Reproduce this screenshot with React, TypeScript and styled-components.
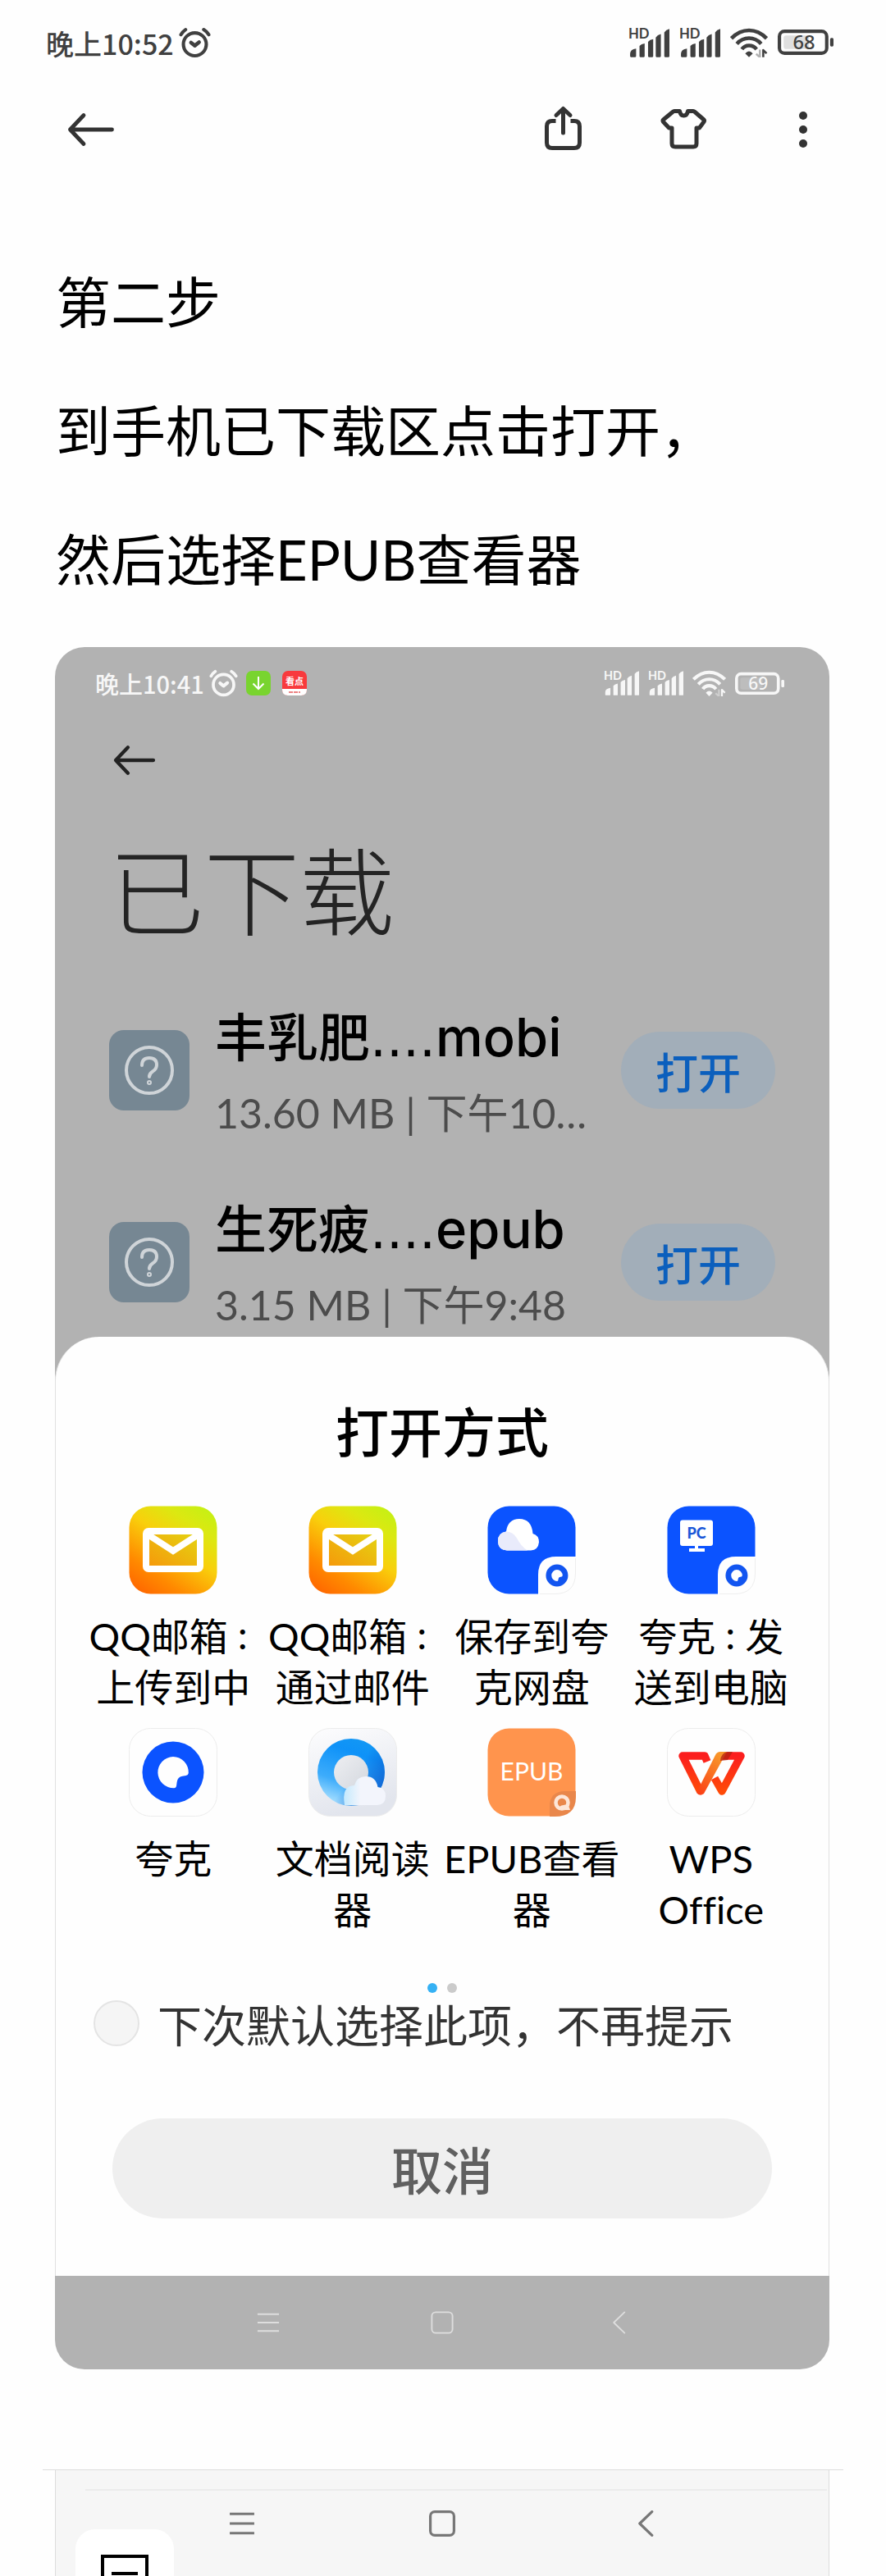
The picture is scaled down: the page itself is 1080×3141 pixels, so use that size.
import React from "react";
import styled, { createGlobalStyle } from "styled-components";

const Global = createGlobalStyle`
  *, *::before, *::after { box-sizing: border-box; }
  body {
    margin: 0;
    background: #fefefe;
    color: #000;
    font-family: Lato, "Noto Sans CJK SC", sans-serif;
    font-variant-ligatures: none;
  }
  h1, h2, p { margin: 0; font-weight: inherit; }
  button {
    font: inherit;
    color: inherit;
    border: 0;
    padding: 0;
    background: none;
    cursor: pointer;
  }
  svg { display: block; flex: none; }
`;

/* ---------- page ---------- */

const Page = styled.div`
  display: flex;
  flex-direction: column;
`;

const StatusBar = styled.div<{ $small?: boolean }>`
  display: flex;
  align-items: center;
  justify-content: space-between;
  height: ${(p) => (p.$small ? 88 : 104)}px;
  padding: ${(p) => (p.$small ? "0 55px 0 49px" : "0 64px 0 56px")};
  color: ${(p) => (p.$small ? "#f7f7f7" : "#404040")};
  font-family: "Noto Sans CJK SC", sans-serif;
  font-size: ${(p) => (p.$small ? 29 : 34)}px;
  font-weight: 500;
`;

const StatusGroup = styled.div<{ $gap: number }>`
  display: flex;
  align-items: center;
  gap: ${(p) => p.$gap}px;
`;

const AppBadges = styled.div`
  display: flex;
  gap: 14px;
  margin-left: 4px;
`;

const Toolbar = styled.header`
  display: flex;
  align-items: center;
  justify-content: space-between;
  height: 108px;
  padding: 0 70px 0 81px;
  color: #333;
`;

const ToolbarActions = styled.div`
  display: flex;
  gap: 87px;
`;

const Article = styled.main`
  padding: 78px 69px 122px 67px;
`;

const Paragraph = styled.p`
  padding-left: 1px;
  font-size: 67px;
  line-height: 157px;
`;

/* ---------- embedded phone card ---------- */

const Phone = styled.section`
  margin-top: 28px;
  border-radius: 36px;
  overflow: hidden;
  background: #b2b2b2;
`;

const PhoneToolbar = styled.div`
  display: flex;
  align-items: center;
  height: 100px;
  padding: 0 70px;
  color: #222;
`;

const PhoneTitle = styled.h1`
  padding: 37px 66px 61px;
  font-size: 116px;
  font-weight: 300;
  line-height: 148px;
  color: #242424;
`;

const FileList = styled.ul`
  display: flex;
  flex-direction: column;
  gap: 70px;
  margin: 0;
  padding: 0 66px 9px;
  list-style: none;
`;

const FileRow = styled.li`
  display: flex;
  align-items: center;
  min-height: 164px;
`;

const FileIcon = styled.div`
  display: flex;
  align-items: center;
  justify-content: center;
  width: 98px;
  height: 98px;
  border-radius: 18px;
  background: #768793;
`;

const FileText = styled.div`
  flex: 1;
  min-width: 0;
  margin: 0 31px;
`;

const FileName = styled.div`
  height: 82px;
  font-size: 63px;
  font-weight: 500;
  line-height: 80px;
  white-space: nowrap;
`;

const Dots = styled.span`
  font-family: "DejaVu Sans", sans-serif;
  line-height: 1;
`;

const Extension = styled.span`
  font-family: Inter, sans-serif;
  font-size: 65px;
  line-height: 1;
`;

const FileMeta = styled.div`
  margin-top: 22px;
  font-size: 50px;
  line-height: 58px;
  color: #4c4c4c;
  white-space: nowrap;
`;

const OpenButton = styled.button`
  width: 188px;
  height: 94px;
  border-radius: 47px;
  background: #a2aeb9;
  color: #0b5fbd;
  font-size: 52px;
  font-weight: 500;
`;

/* ---------- bottom sheet ---------- */

const Sheet = styled.div`
  display: flex;
  flex-direction: column;
  padding: 76px 0 70px;
  border: solid #e0e0e0;
  border-width: 0 1px;
  border-radius: 54px 54px 0 0;
  background: #fefefe;
`;

const SheetTitle = styled.h2`
  font-size: 65px;
  font-weight: 500;
  line-height: 80px;
  text-align: center;
`;

const AppGrid = styled.div`
  display: grid;
  grid-template-columns: repeat(4, 1fr);
  row-gap: 18px;
  margin: 50px 34px 0;
`;

const AppItem = styled.button`
  display: flex;
  flex-direction: column;
  align-items: center;
  gap: 20px;
  color: #000;
`;

const AppLabel = styled.span`
  height: 125px;
  font-size: 47px;
  line-height: 62px;
  text-align: center;
  white-space: pre;
`;

const Colon = styled.span`
  font-family: "Noto Sans CJK TC", sans-serif;
  font-size: 36px;
  font-weight: 500;
  line-height: 1;
`;

const Pager = styled.div`
  display: flex;
  justify-content: center;
  gap: 12px;
  margin-top: 58px;
`;

const PageDot = styled.span<{ $active?: boolean }>`
  width: 12px;
  height: 12px;
  border-radius: 50%;
  background: ${(p) => (p.$active ? "#35b1f4" : "#cbcbcb")};
`;

const Remember = styled.label`
  display: flex;
  align-items: center;
  gap: 22px;
  height: 64px;
  margin-top: 5px;
  padding: 0 46px;
  font-size: 54px;
  color: #333;
`;

const Check = styled.input`
  appearance: none;
  width: 56px;
  height: 56px;
  margin: 0;
  border: 2px solid #e4e4e4;
  border-radius: 50%;
  background: #f5f5f5;
`;

const CancelButton = styled.button`
  height: 122px;
  margin: 84px 69px 0;
  border-radius: 61px;
  background: #efefef;
  color: #606060;
  font-size: 62px;
  font-weight: 500;
`;

/* ---------- navigation ---------- */

const NavBar = styled.nav<{ $dark?: boolean }>`
  display: flex;
  justify-content: center;
  align-items: center;
  gap: ${(p) => (p.$dark ? 212 : 184)}px;
  height: ${(p) => (p.$dark ? 80 : 114)}px;
  color: ${(p) => (p.$dark ? "#777" : "#dedede")};
`;

const Footer = styled.footer`
  padding: 0 52px;
`;

const FooterPanel = styled.div`
  position: relative;
  height: 129px;
  margin: 0 17px 0 15px;
  padding-top: 23px;
  overflow: hidden;
  border: solid #dcdcdc;
  border-width: 0 1px;
  background: #f6f6f6;
`;

const FooterRule = styled.hr<{ $inset?: boolean }>`
  height: ${(p) => (p.$inset ? 2 : 1)}px;
  margin: ${(p) => (p.$inset ? "0 2px 0 36px" : "0")};
  border: 0;
  background: ${(p) => (p.$inset ? "#ececec" : "#dcdcdc")};
`;

const FloatingNote = styled.button`
  position: absolute;
  left: 24px;
  top: 72px;
  display: flex;
  justify-content: center;
  width: 120px;
  height: 120px;
  padding-top: 31px;
  border-radius: 24px;
  background: #fff;
`;

/* ---------- icons ---------- */

const stroke = {
  fill: "none",
  stroke: "currentColor",
  strokeLinecap: "round" as const,
  strokeLinejoin: "round" as const,
};

const AlarmIcon = ({ w }: { w: number }) => (
  <svg width={w} height={w} viewBox="0 0 38 38" {...stroke} strokeWidth="4">
    <circle cx="19" cy="20.500" r="13.600" />
    <path d="M2.500 9q2-3.500 5.500-6M35.500 9q-2-3.500-6-6" />
    <path d="M14.500 18.500l4.500 3.500 5-4" strokeWidth="4.500" />
  </svg>
);

const SignalIcon = ({ w }: { w: number }) => (
  <svg width={w} height={(w * 46) / 48} viewBox="0 -6 48 46" fill="currentColor">
    <text x="0" y="12.500" fontSize="16" fontWeight="700" fontFamily="Lato, sans-serif">HD</text>
    <path d="M2 33v-3q0-5 7-6v9q0 1-1 1H3q-1 0-1-1zM13 33V21q2-2.500 6-3v15q0 1-1 1h-4q-1 0-1-1zM23 33V16q2-2.500 6-3v20q0 1-1 1h-4q-1 0-1-1zM32 33V11q2-3 6-4v26q0 1-1 1h-4q-1 0-1-1zM42 33V5q2-3 6-4v32q0 1-1 1h-4q-1 0-1-1z" />
  </svg>
);

const WifiIcon = ({ w }: { w: number }) => (
  <svg width={w} height={(w * 36) / 45} viewBox="0 0 45 36" {...stroke} strokeLinecap="butt" strokeWidth="4.500">
    <path d="M1.500 12.500Q11 3 22.500 3T43.500 12.500M8 19Q14 12.300 22.500 12.300T37 19M14 25.500Q17 21 22.500 21T31.500 25.500" />
    <path d="M18 30.500q4.500-5 9 0l-4.500 4.500z" fill="currentColor" stroke="none" />
    <path d="M35.500 26v9l-4.500-4" strokeWidth="2.500" strokeOpacity=".4" />
    <path d="M39.500 35v-8.500l4 4" strokeWidth="2.500" />
  </svg>
);

const BatteryIcon = ({ w, level }: { w: number; level: number }) => (
  <svg width={w} height={(w * 34) / 66} viewBox="0 -2 66 34" fill="currentColor">
    <rect x="2" y="2" width="56" height="26" rx="6" fill="none" stroke="currentColor" strokeWidth="4" />
    <rect x="7" y="7" width="30" height="16" rx="3" opacity=".16" />
    <rect x="62" y="10" width="4" height="10" rx="1.500" />
    <text x="31" y="23.500" fontSize="23" fontWeight="500" textAnchor="middle" fontFamily="Noto Sans, sans-serif">{level}</text>
  </svg>
);

const StatusIcons = ({ small, level }: { small?: boolean; level: number }) => (
  <StatusGroup $gap={small ? 11 : 12}>
    <SignalIcon w={small ? 43 : 50} />
    <SignalIcon w={small ? 43 : 50} />
    <WifiIcon w={small ? 41 : 46} />
    <BatteryIcon w={small ? 60 : 68} level={level} />
  </StatusGroup>
);

const BackIcon = ({ w }: { w: number }) => (
  <svg width={w} height={w} viewBox="0 0 60 60" {...stroke} strokeWidth="4.800">
    <path d="M4.500 30H55.500M21 12.500L4.500 30 21 47.500" />
  </svg>
);

const ShareIcon = () => (
  <svg width="60" height="60" viewBox="0 0 60 60" {...stroke} strokeWidth="5">
    <path d="M21.500 19.500H17q-6.500 0-6.500 6.500v20q0 6.500 6.500 6.500H44q6.500 0 6.500-6.500V26q0-6.500-6.500-6.500h-4.500" strokeLinecap="butt" />
    <path d="M30.500 34V5M22 12.500L30.500 4.500 39 12.500" />
  </svg>
);

const ShirtIcon = () => (
  <svg width="60" height="60" viewBox="0 0 60 60" {...stroke} strokeWidth="5">
    <path d="M19 7.500h6.500q1 5.500 5 5.500t5-5.500H42q1 0 2 1L55 18q1 1 0 2.500l-5.500 7.500H46v19q0 4-4 4H20q-4 0-4-4V28h-3.500L5.500 20.500Q4.500 19 5.500 18L17 8.500q1-1 2-1z" />
  </svg>
);

const MoreIcon = () => (
  <svg width="60" height="60" viewBox="0 0 60 60" fill="currentColor">
    <circle cx="29" cy="13" r="5" />
    <circle cx="29" cy="30" r="5" />
    <circle cx="29" cy="47" r="5" />
  </svg>
);

const DownloadBadge = () => (
  <svg width="30" height="30" viewBox="0 0 30 30">
    <rect width="30" height="30" rx="7" fill="#79d42f" />
    <path d="M15 7v15M8.500 15.500L15 22l6.500-6.500" fill="none" stroke="#fff" strokeWidth="2" />
  </svg>
);

const KandianBadge = () => (
  <svg width="30" height="30" viewBox="0 0 30 30">
    <rect width="30" height="30" rx="7" fill="#f83a3d" />
    <path d="M0 22h30v1q0 7-7 7H7q-7 0-7-7z" fill="#fff" />
    <text x="15" y="17" fontSize="11" fontWeight="700" fill="#fff" textAnchor="middle">看点</text>
    <path d="M8 26h3m1-1v2m2-1h3m1-1v2m2-1h2" stroke="#e8595b" strokeWidth="1.500" />
  </svg>
);

const QuestionIcon = () => (
  <svg width="62" height="62" viewBox="0 0 62 62" {...stroke} stroke="#cfd4d8" strokeWidth="4">
    <circle cx="31" cy="31" r="28" />
    <path d="M22 25q0-9 9-9t9 8.500q0 5-5 8-4 2.500-4 6.500" />
    <circle cx="31" cy="46" r="1" />
  </svg>
);

const MenuNav = ({ w, s }: { w: number; s: number }) => (
  <svg width={w} height={w} viewBox="0 0 30 30" fill="none" stroke="currentColor" strokeWidth={s}>
    <path d="M1 4h28M1 15h28M1 26h28" />
  </svg>
);

const HomeNav = ({ w, s }: { w: number; s: number }) => (
  <svg width={w} height={w} viewBox="0 0 30 30" fill="none" stroke="currentColor" strokeWidth={s}>
    <rect x="1.500" y="1.500" width="27" height="27" rx="5" />
  </svg>
);

const BackNav = ({ w, s }: { w: number; s: number }) => (
  <svg width={w} height={w} viewBox="0 0 30 30" {...stroke} strokeWidth={s}>
    <path d="M26 1.500L12 15 26 28.500" />
  </svg>
);

const NoteIcon = () => (
  <svg width="58" height="60" viewBox="0 0 58 60" fill="none" stroke="#000" strokeWidth="4">
    <path d="M2 2h54v56H2zM13 23h32" />
  </svg>
);

const Tile = ({ children, fill, border }: { children?: React.ReactNode; fill: string; border?: boolean }) => (
  <svg width="108" height="108" viewBox="0 0 108 108">
    <rect x=".5" y=".5" width="107" height="107" rx="26" fill={fill} stroke={border ? "#ececec" : "none"} />
    {children}
  </svg>
);

const MailTile = ({ id }: { id: string }) => (
  <Tile fill={`url(#${id}b)`}>
    <defs>
      <linearGradient id={`${id}b`} x1=".15" y1="1" x2=".85" y2="0">
        <stop offset="0" stopColor="#ff6800" />
        <stop offset=".22" stopColor="#ff8a00" />
        <stop offset=".55" stopColor="#f9cf0c" />
        <stop offset=".8" stopColor="#dce811" />
        <stop offset="1" stopColor="#c6f014" />
      </linearGradient>
      <linearGradient id={`${id}e`} x1="0" y1="1" x2="1" y2="0">
        <stop offset="0" stopColor="#f7950a" />
        <stop offset="1" stopColor="#e3d812" />
      </linearGradient>
    </defs>
    <rect x="21" y="31" width="66" height="46" rx="3" fill={`url(#${id}e)`} stroke="#fff" strokeWidth="8" />
    <path d="M23 35l31 20 31-20" fill="none" stroke="#fff" strokeWidth="8" />
  </Tile>
);

const quarkRing =
  "M54 16.500a37.500 37.500 0 1 0 0 75a37.500 37.500 0 1 0 0-75zM54 35a19 19 0 0 1 18.800 20q-.3 2.500-3 3l-4.500.8q-5.800 1-6.600 7l-.6 4.500q-.4 3-3 3A19 19 0 1 1 54 35z";

const QuarkCorner = () => (
  <>
    <path d="M62 108V84q0-22 22-22h24v20q0 26-26 26z" fill="#fefefe" />
    <path d="M107.500 64v18q0 25.500-25.500 25.500H64" fill="none" stroke="#eee" />
    <g transform="translate(65.500 65.500) scale(.36)">
      <path d={quarkRing} fill="#1255f0" fillRule="evenodd" />
    </g>
  </>
);

const CloudTile = () => (
  <Tile fill="#0b53ff">
    <path d="M24 54.500Q13 53.500 13 43q0-10 10-11.500Q25 16 39 16q15 0 16.500 18Q63 36 63 44.500 62 54 53 54.500z" fill="#fff" />
    <path d="M24 54.500Q13 53.500 13 43q0-10 10-11.500 8 0 13 8 5 10 13 15z" fill="#e9ebfb" />
    <QuarkCorner />
  </Tile>
);

const PcTile = () => (
  <Tile fill="#0b53ff">
    <rect x="16" y="17.500" width="40" height="31.500" rx="3" fill="#fff" />
    <path d="M34 49h4v3h8v4H27v-4h7z" fill="#fff" />
    <text x="36" y="40" fontSize="18" fontWeight="900" fill="#1a56d8" textAnchor="middle">PC</text>
    <QuarkCorner />
  </Tile>
);

const QuarkTile = () => (
  <Tile fill="#fefefe" border>
    <path d={quarkRing} fill="#0b53ff" fillRule="evenodd" />
  </Tile>
);

const BrowserTile = () => (
  <Tile fill="url(#qbBg)" border>
    <defs>
      <linearGradient id="qbBg" x1="0" y1="0" x2=".3" y2="1">
        <stop offset="0" stopColor="#fdfdfe" />
        <stop offset="1" stopColor="#e2e5ed" />
      </linearGradient>
      <linearGradient id="qbRing" x1=".25" y1="1" x2=".6" y2="0">
        <stop offset="0" stopColor="#b5e6ff" />
        <stop offset=".35" stopColor="#3dacfb" />
        <stop offset=".8" stopColor="#0e92f8" />
        <stop offset="1" stopColor="#1297f5" />
      </linearGradient>
      <linearGradient id="qbShade" x1="0" y1="0" x2="1" y2=".7">
        <stop offset=".6" stopColor="#0b5fd0" stopOpacity="0" />
        <stop offset="1" stopColor="#0b5fd0" stopOpacity=".9" />
      </linearGradient>
      <linearGradient id="qbHole" x1="0" y1="0" x2="1" y2="1">
        <stop offset="0" stopColor="#eeeff2" />
        <stop offset="1" stopColor="#d3d7de" />
      </linearGradient>
      <linearGradient id="qbCloud" x1="0" y1="0" x2="1" y2="0">
        <stop offset="0" stopColor="#c4e9fd" />
        <stop offset=".4" stopColor="#f3f5fc" />
      </linearGradient>
    </defs>
    <circle cx="52" cy="54" r="41" fill="url(#qbRing)" />
    <circle cx="52" cy="54" r="41" fill="url(#qbShade)" />
    <circle cx="52" cy="54" r="21" fill="url(#qbHole)" />
    <path d="M44 94q-4-24 12-24 3-11 14-11 12 0 14.500 13Q94 73 94 83q0 10.500-10 11z" fill="url(#qbCloud)" />
  </Tile>
);

const EpubTile = () => (
  <Tile fill="#ff944d">
    <text x="54" y="64" fontSize="30" fill="#fff" textAnchor="middle">EPUB</text>
    <path d="M76 108V96q0-19 19-19h13v7q0 24-26 24z" fill="#e9874b" />
    <circle cx="91" cy="91" r="7.500" fill="none" stroke="#fde6d8" strokeWidth="4.500" />
    <path d="M88 100q-1-6 5-6 6-2 8 6z" fill="#fde6d8" />
  </Tile>
);

const WpsTile = () => (
  <Tile fill="#fefefe" border>
    <defs>
      <linearGradient id="wpsRed" x1="0" y1="0" x2="0" y2="1">
        <stop offset="0" stopColor="#fb1e1e" />
        <stop offset="1" stopColor="#ff4a08" />
      </linearGradient>
      <linearGradient id="wpsGold" x1="0" y1="1" x2=".6" y2="0">
        <stop offset="0" stopColor="#fb3a14" />
        <stop offset="1" stopColor="#f8952a" />
      </linearGradient>
    </defs>
    <path d="M66 34H90L67 77 58 61" fill="none" stroke="url(#wpsRed)" strokeWidth="9.500" strokeLinejoin="round" />
    <path d="M49 41l-3-7H19l21.500 43" fill="none" stroke="url(#wpsRed)" strokeWidth="9.500" strokeLinejoin="round" />
    <path d="M36 79l23-46q2-4 6-4h8L45 80q-5 4-9-1z" fill="url(#wpsGold)" />
    <path d="M65 40q1-10 9-11h6l-6 10z" fill="#b3200f" opacity=".75" />
  </Tile>
);

/* ---------- data ---------- */

const files = [
  { stem: "丰乳肥", ext: "mobi", meta: "13.60 MB | 下午10…" },
  { stem: "生死疲", ext: "epub", meta: "3.15 MB | 下午9:48" },
];

const apps: { icon: React.ReactNode; label: string }[] = [
  { icon: <MailTile id="mailA" />, label: "QQ邮箱：\n上传到中" },
  { icon: <MailTile id="mailB" />, label: "QQ邮箱：\n通过邮件" },
  { icon: <CloudTile />, label: "保存到夸\n克网盘" },
  { icon: <PcTile />, label: "夸克：发\n送到电脑" },
  { icon: <QuarkTile />, label: "夸克" },
  { icon: <BrowserTile />, label: "文档阅读\n器" },
  { icon: <EpubTile />, label: "EPUB查看\n器" },
  { icon: <WpsTile />, label: "WPS\nOffice" },
];

const Label = ({ text }: { text: string }) => {
  const [head, tail] = text.split("：");
  return (
    <AppLabel>
      {head}
      {tail !== undefined && <Colon>：</Colon>}
      {tail}
    </AppLabel>
  );
};

const SystemNav = ({ dark }: { dark?: boolean }) => {
  const w = dark ? 32 : 28;
  const s = dark ? 3 : 2;
  return (
    <NavBar $dark={dark}>
      <button aria-label="最近任务"><MenuNav w={w} s={s} /></button>
      <button aria-label="主屏幕"><HomeNav w={w} s={s} /></button>
      <button aria-label="返回"><BackNav w={w} s={s} /></button>
    </NavBar>
  );
};

export default function App() {
  return (
    <Page>
      <Global />
      <StatusBar>
        <StatusGroup $gap={6}>
          晚上10:52
          <AlarmIcon w={39} />
        </StatusGroup>
        <StatusIcons level={68} />
      </StatusBar>
      <Toolbar>
        <button aria-label="返回"><BackIcon w={60} /></button>
        <ToolbarActions>
          <button aria-label="分享"><ShareIcon /></button>
          <button aria-label="主题"><ShirtIcon /></button>
          <button aria-label="更多"><MoreIcon /></button>
        </ToolbarActions>
      </Toolbar>
      <Article>
        <Paragraph>第二步</Paragraph>
        <Paragraph>到手机已下载区点击打开，</Paragraph>
        <Paragraph>然后选择EPUB查看器</Paragraph>
        <Phone>
          <StatusBar $small>
            <StatusGroup $gap={6}>
              晚上10:41
              <AlarmIcon w={35} />
              <AppBadges>
                <DownloadBadge />
                <KandianBadge />
              </AppBadges>
            </StatusGroup>
            <StatusIcons small level={69} />
          </StatusBar>
          <PhoneToolbar>
            <button aria-label="返回"><BackIcon w={54} /></button>
          </PhoneToolbar>
          <PhoneTitle>已下载</PhoneTitle>
          <FileList>
            {files.map((f) => (
              <FileRow key={f.ext}>
                <FileIcon><QuestionIcon /></FileIcon>
                <FileText>
                  <FileName>
                    {f.stem}
                    <Dots>....</Dots>
                    <Extension>{f.ext}</Extension>
                  </FileName>
                  <FileMeta>{f.meta}</FileMeta>
                </FileText>
                <OpenButton>打开</OpenButton>
              </FileRow>
            ))}
          </FileList>
          <Sheet>
            <SheetTitle>打开方式</SheetTitle>
            <AppGrid>
              {apps.map((a) => (
                <AppItem key={a.label}>
                  {a.icon}
                  <Label text={a.label} />
                </AppItem>
              ))}
            </AppGrid>
            <Pager>
              <PageDot $active />
              <PageDot />
            </Pager>
            <Remember>
              <Check type="checkbox" />
              下次默认选择此项，不再提示
            </Remember>
            <CancelButton>取消</CancelButton>
          </Sheet>
          <SystemNav />
        </Phone>
      </Article>
      <Footer>
        <FooterRule />
        <FooterPanel>
          <FooterRule $inset />
          <SystemNav dark />
          <FloatingNote aria-label="笔记"><NoteIcon /></FloatingNote>
        </FooterPanel>
      </Footer>
    </Page>
  );
}
